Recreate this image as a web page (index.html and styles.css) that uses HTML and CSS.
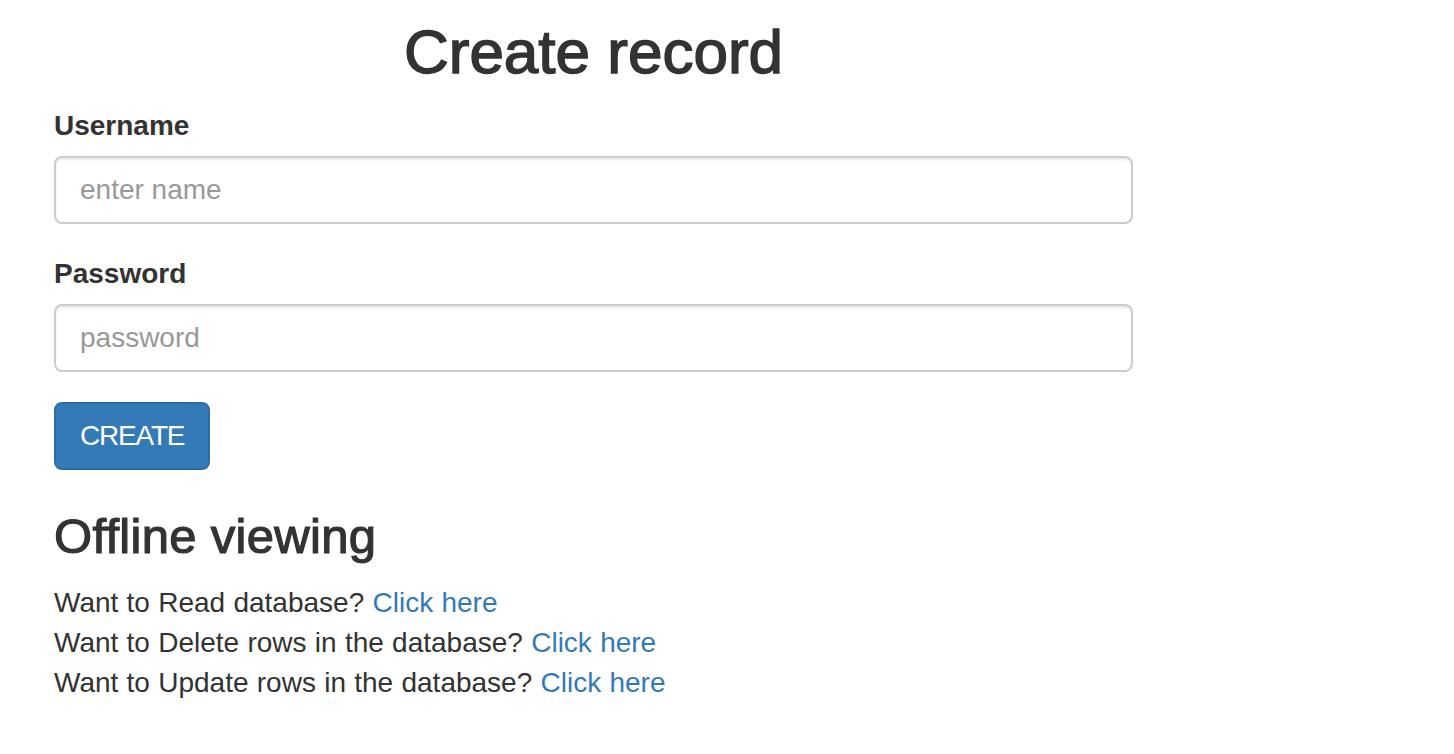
FILE: index.html
```html
<!DOCTYPE html>
<html lang="en">
<head>
<meta charset="utf-8">
<title>Create record</title>
<link rel="stylesheet" href="styles.css">
</head>
<body>
<div class="page">
  <h1 class="title">Create record</h1>
  <form class="form">
    <div class="form-group">
      <label class="label" for="username">Username</label>
      <input class="input" id="username" type="text" placeholder="enter name">
    </div>
    <div class="form-group">
      <label class="label" for="password">Password</label>
      <input class="input" id="password" type="password" placeholder="password">
    </div>
    <button class="btn" type="button">CREATE</button>
  </form>
  <h3 class="subtitle">Offline viewing</h3>
  <div class="links">
    <div class="line">Want to Read database? <a class="link" href="#">Click here</a></div>
    <div class="line">Want to Delete rows in the database? <a class="link" href="#">Click here</a></div>
    <div class="line">Want to Update rows in the database? <a class="link" href="#">Click here</a></div>
  </div>
</div>
</body>
</html>
```

FILE: styles.css
```css
html, body {
  margin: 0;
  padding: 0;
  background: #fff;
}
body {
  font-family: "Liberation Sans", Arial, Helvetica, sans-serif;
  font-size: 28px;
  line-height: 40px;
  color: #333;
}
.page {
  width: 1079px;
  padding-left: 54px;
  padding-top: 18px;
}
.title {
  margin: 0 0 20px;
  font-size: 62px;
  line-height: 68px;
  font-weight: 500;
  text-align: center;
  -webkit-text-stroke: 1.5px #333;
}
.form {
  margin: 0;
}
.form-group {
  margin-bottom: 30px;
}
.label {
  display: block;
  font-weight: bold;
  margin-bottom: 10px;
}
.input {
  display: block;
  box-sizing: border-box;
  width: 100%;
  height: 68px;
  margin: 0;
  padding: 12px 24px;
  font-family: inherit;
  font-size: 28px;
  line-height: 40px;
  color: #555;
  background: #fff;
  border: 2px solid #ccc;
  border-radius: 8px;
  box-shadow: inset 0 2px 2px rgba(0,0,0,0.075);
  outline: none;
}
.input::placeholder {
  color: #999;
}
.btn {
  display: block;
  box-sizing: border-box;
  height: 68px;
  margin: 0;
  padding: 12px 24px;
  font-family: inherit;
  font-size: 28px;
  line-height: 40px;
  letter-spacing: -1.2px;
  color: #fff;
  background: #337ab7;
  border: 2px solid #2e6da4;
  border-radius: 8px;
}
.subtitle {
  margin: 40px 0 20px;
  font-size: 49px;
  line-height: 53px;
  font-weight: 500;
  letter-spacing: 0.3px;
  -webkit-text-stroke: 1.2px #333;
}
.line {
  word-spacing: 0.5px;
}
.link {
  color: #337ab7;
  text-decoration: none;
}
```
